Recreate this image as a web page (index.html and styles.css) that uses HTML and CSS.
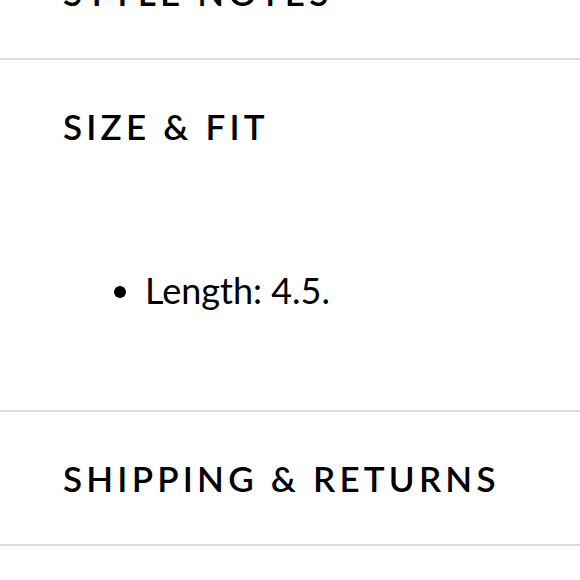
FILE: index.html
```html
<!DOCTYPE html>
<html>
<head>
<meta charset="utf-8">
<link rel="stylesheet" href="styles.css">
</head>
<body>
<div class="accordion">
  <section class="panel">
    <h2 class="panel-title">STYLE NOTES</h2>
  </section>
  <section class="panel">
    <h2 class="panel-title">SIZE &amp; FIT</h2>
    <ul class="panel-list">
      <li>Length: 4.5.</li>
    </ul>
  </section>
  <section class="panel">
    <h2 class="panel-title">SHIPPING &amp; RETURNS</h2>
  </section>
</div>
</body>
</html>
```
FILE: styles.css
```css
html, body {
  margin: 0;
  padding: 0;
  background: #fff;
}
body {
  font-family: Lato, "Noto Sans", sans-serif;
  color: #000;
  overflow: hidden;
}
.accordion {
  margin-top: -74px;
}
.panel {
  border-bottom: 2px solid #dcdcdc;
}
.panel-title {
  margin: 0;
  height: 132px;
  display: flex;
  align-items: center;
  padding-left: 63px;
  font-size: 35px;
  font-weight: 600;
  letter-spacing: 0.12em;
  line-height: 1;
}
.panel-list {
  margin: 0;
  padding: 74px 0 96px 145px;
  font-size: 36px;
  line-height: 48px;
}
```
